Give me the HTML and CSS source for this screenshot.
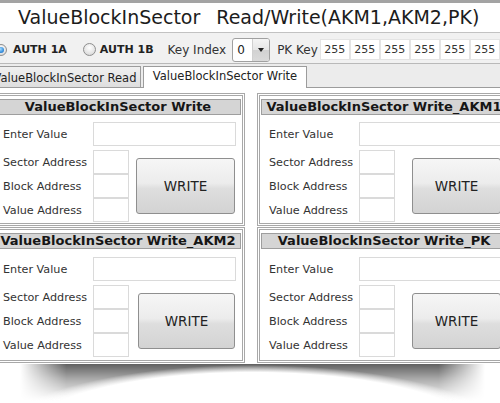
FILE: index.html
```html
<!DOCTYPE html>
<html>
<head>
<meta charset="utf-8">
<title>ValueBlockInSector</title>
<link rel="stylesheet" href="styles.css">
</head>
<body>
<div class="app">
  <header class="titlebar"><span>ValueBlockInSector</span><span class="title-gap">Read/Write(AKM1,AKM2,PK)</span></header>

  <div class="authrow">
    <label class="radio-item first"><span class="radio checked"></span><b>AUTH 1A</b></label>
    <label class="radio-item second"><span class="radio big"></span><b>AUTH 1B</b></label>
    <span class="lbl keyidx">Key Index</span>
    <div class="select"><span class="sel-val">0</span><span class="sel-btn"><span class="tri"></span></span></div>
    <span class="lbl pk">PK Key</span>
    <div class="keys">
      <span>255</span><span>255</span><span>255</span><span>255</span><span>255</span><span>255</span><span>255</span><span>255</span>
    </div>
  </div>

  <div class="tabs">
    <div class="tab">ValueBlockInSector Read</div>
    <div class="tab active">ValueBlockInSector Write</div>
  </div>

  <div class="content">
    <div class="grid">
      <div class="panel">
        <div class="panel-in">
          <div class="phead">ValueBlockInSector Write</div>
          <div class="prow enter"><span class="plbl">Enter Value</span><span class="inp wide"></span></div>
          <div class="pbody">
            <div class="addr">
              <div class="prow"><span class="plbl">Sector Address</span><span class="inp sm"></span></div>
              <div class="prow"><span class="plbl">Block Address</span><span class="inp sm"></span></div>
              <div class="prow"><span class="plbl">Value Address</span><span class="inp sm"></span></div>
            </div>
            <div class="btn">WRITE</div>
          </div>
        </div>
      </div>

      <div class="panel right">
        <div class="panel-in">
          <div class="phead">ValueBlockInSector Write_AKM1</div>
          <div class="prow enter"><span class="plbl">Enter Value</span><span class="inp wide"></span></div>
          <div class="pbody">
            <div class="addr">
              <div class="prow"><span class="plbl">Sector Address</span><span class="inp sm"></span></div>
              <div class="prow"><span class="plbl">Block Address</span><span class="inp sm"></span></div>
              <div class="prow"><span class="plbl">Value Address</span><span class="inp sm"></span></div>
            </div>
            <div class="btn">WRITE</div>
          </div>
        </div>
      </div>

      <div class="panel tall">
        <div class="panel-in">
          <div class="phead">ValueBlockInSector Write_AKM2</div>
          <div class="prow enter"><span class="plbl">Enter Value</span><span class="inp wide"></span></div>
          <div class="pbody">
            <div class="addr">
              <div class="prow"><span class="plbl">Sector Address</span><span class="inp sm"></span></div>
              <div class="prow"><span class="plbl">Block Address</span><span class="inp sm"></span></div>
              <div class="prow"><span class="plbl">Value Address</span><span class="inp sm"></span></div>
            </div>
            <div class="btn">WRITE</div>
          </div>
        </div>
      </div>

      <div class="panel right tall">
        <div class="panel-in">
          <div class="phead">ValueBlockInSector Write_PK</div>
          <div class="prow enter"><span class="plbl">Enter Value</span><span class="inp wide"></span></div>
          <div class="pbody">
            <div class="addr">
              <div class="prow"><span class="plbl">Sector Address</span><span class="inp sm"></span></div>
              <div class="prow"><span class="plbl">Block Address</span><span class="inp sm"></span></div>
              <div class="prow"><span class="plbl">Value Address</span><span class="inp sm"></span></div>
            </div>
            <div class="btn">WRITE</div>
          </div>
        </div>
      </div>
    </div>
  </div>

  <div class="shadow"></div>
</div>
</body>
</html>
```

FILE: styles.css
```css
html, body {
  margin: 0;
  padding: 0;
  background: #fff;
  overflow: hidden;
}

body {
  font-family: "DejaVu Sans", Verdana, sans-serif;
  color: #2a2a2a;
}

.app {
  width: 530px;
  margin-left: -9px;
}

/* Title */
.titlebar {
  border-top: 3px solid #a3a3a3;
  border-bottom: 1px solid #c2c2c2;
  height: 29px;
  line-height: 29px;
  padding-left: 27px;
  font-size: 19px;
  color: #1c1c1c;
  background: #fff;
  white-space: nowrap;
}

.title-gap {
  margin-left: 16px;
}

/* Auth row */
.authrow {
  display: flex;
  align-items: center;
  height: 27px;
  padding-top: 3px;
  padding-left: 4px;
  background: #f1f1f1;
  border-bottom: 1px solid #b9b9b9;
  font-size: 12px;
  white-space: nowrap;
}

.authrow > * {
  flex-shrink: 0;
}

.radio-item {
  display: flex;
  align-items: center;
}

.radio-item b {
  font-size: 11px;
  font-weight: bold;
  color: #222;
}

.radio-item.first .radio {
  margin-right: 6px;
}

.radio-item.second {
  margin-left: 16px;
}

.radio-item.second .radio {
  margin-right: 4px;
}

.radio {
  flex-shrink: 0;
  width: 12px;
  height: 12px;
  box-sizing: border-box;
  border-radius: 50%;
  border: 1px solid #8e8e8e;
  background: radial-gradient(circle at 50% 35%, #ffffff 0%, #e4e4e4 60%, #cfcfcf 100%);
  display: flex;
  align-items: center;
  justify-content: center;
}

.radio.big {
  width: 13px;
  height: 13px;
}

.radio.checked::after {
  content: "";
  width: 6px;
  height: 6px;
  border-radius: 50%;
  background: radial-gradient(circle at 40% 35%, #a6dcff 0%, #3f95e0 55%, #1a5fb0 100%);
}

.lbl {
  color: #333;
}

.keyidx {
  margin-left: 14px;
}

.select {
  width: 38px;
  height: 24px;
  box-sizing: border-box;
  margin-left: 6px;
  border: 1px solid #a0a0a0;
  border-radius: 3px;
  background: #fff;
  display: flex;
  align-items: stretch;
}

.sel-val {
  flex: 1;
  padding-left: 4px;
  line-height: 22px;
  font-size: 12px;
  color: #222;
}

.sel-btn {
  width: 16px;
  flex-shrink: 0;
  display: flex;
  align-items: center;
  justify-content: center;
  border-left: 1px solid #d0d0d0;
  border-radius: 0 2px 2px 0;
  background: linear-gradient(to bottom, #f4f4f4 0%, #e6e6e6 50%, #d2d2d2 51%, #dadada 100%);
}

.tri {
  width: 0;
  height: 0;
  border-left: 3.5px solid transparent;
  border-right: 3.5px solid transparent;
  border-top: 4px solid #222;
}

.pk {
  margin-left: 7px;
}

.keys {
  display: flex;
  margin-left: 2px;
}

.keys span {
  flex-shrink: 0;
  width: 30px;
  height: 21px;
  box-sizing: border-box;
  border: 1px solid #e4e4e4;
  background: #fff;
  font-size: 11px;
  line-height: 19px;
  text-align: center;
  color: #333;
}

/* Tabs */
.tabs {
  display: flex;
  align-items: flex-end;
  height: 23px;
  background: #ececec;
  border-bottom: 1px solid #9c9c9c;
  font-size: 11.5px;
  white-space: nowrap;
}

.tab {
  flex-shrink: 0;
  width: 152px;
  height: 21px;
  box-sizing: border-box;
  margin-left: -2px;
  border: 1px solid #9c9c9c;
  border-bottom: none;
  background: linear-gradient(to bottom, #f0f0f0, #dedede);
  color: #222;
  text-align: center;
  line-height: 22px;
}

.tab.active {
  width: 164px;
  height: 22px;
  margin-left: 2px;
  margin-bottom: -1px;
  background: #fff;
  line-height: 19px;
}

/* Content */
.content {
  background: #fff;
  padding-top: 5px;
}

.grid {
  display: grid;
  grid-template-columns: 254px 254px;
  column-gap: 12px;
  row-gap: 1px;
}

.panel {
  border: 1px solid #a8a8a8;
  padding: 1px;
  background: #fff;
}

.panel-in {
  border: 1px solid #a8a8a8;
  padding: 3px 1px 1px 1px;
}

.panel.tall .panel-in {
  padding-bottom: 3px;
}

.phead {
  height: 14px;
  line-height: 14px;
  border: 1px solid #9e9e9e;
  background: #d5d5d5;
  font-size: 13px;
  font-weight: bold;
  text-align: center;
  color: #161616;
  white-space: nowrap;
  overflow: hidden;
}

.prow {
  display: flex;
  align-items: center;
  padding-left: 8px;
}

.prow.enter {
  margin-top: 7px;
  margin-bottom: 4px;
}

.panel.tall .prow.enter {
  margin-top: 8px;
}

.plbl {
  width: 90px;
  flex-shrink: 0;
  font-size: 11.2px;
  color: #333;
  white-space: nowrap;
}

.inp {
  display: block;
  flex-shrink: 0;
  height: 24px;
  box-sizing: border-box;
  border: 1px solid #dadada;
  background: #fff;
}

.inp.wide {
  width: 143px;
}

.inp.sm {
  width: 36px;
}

.pbody {
  display: flex;
  align-items: center;
}

.btn {
  flex-shrink: 0;
  margin-left: auto;
  margin-right: 6px;
  width: 99px;
  height: 56px;
  box-sizing: border-box;
  border: 1px solid #8f8f8f;
  border-radius: 3px;
  background: linear-gradient(to bottom, #f6f6f6 0%, #ececec 45%, #dedede 55%, #d3d3d3 100%);
  display: flex;
  align-items: center;
  justify-content: center;
  font-size: 13.5px;
  color: #222;
}

.panel.tall .btn {
  width: 97px;
}

.panel.right .btn {
  width: 89px;
}

/* Curved shadow under the form */
.shadow {
  height: 37px;
  margin: 1px 36px 0 29px;
  background:
    radial-gradient(260px 74px at 50% 75px, #fff 0%, #fff 90%, rgba(255, 255, 255, 0) 100%),
    linear-gradient(to bottom, rgba(0, 0, 0, 0.62) 0%, rgba(0, 0, 0, 0.3) 45%, rgba(0, 0, 0, 0) 100%);
  -webkit-mask-image: linear-gradient(to right, transparent 0%, #000 10%, #000 90%, transparent 100%);
  mask-image: linear-gradient(to right, transparent 0%, #000 10%, #000 90%, transparent 100%);
}
```
